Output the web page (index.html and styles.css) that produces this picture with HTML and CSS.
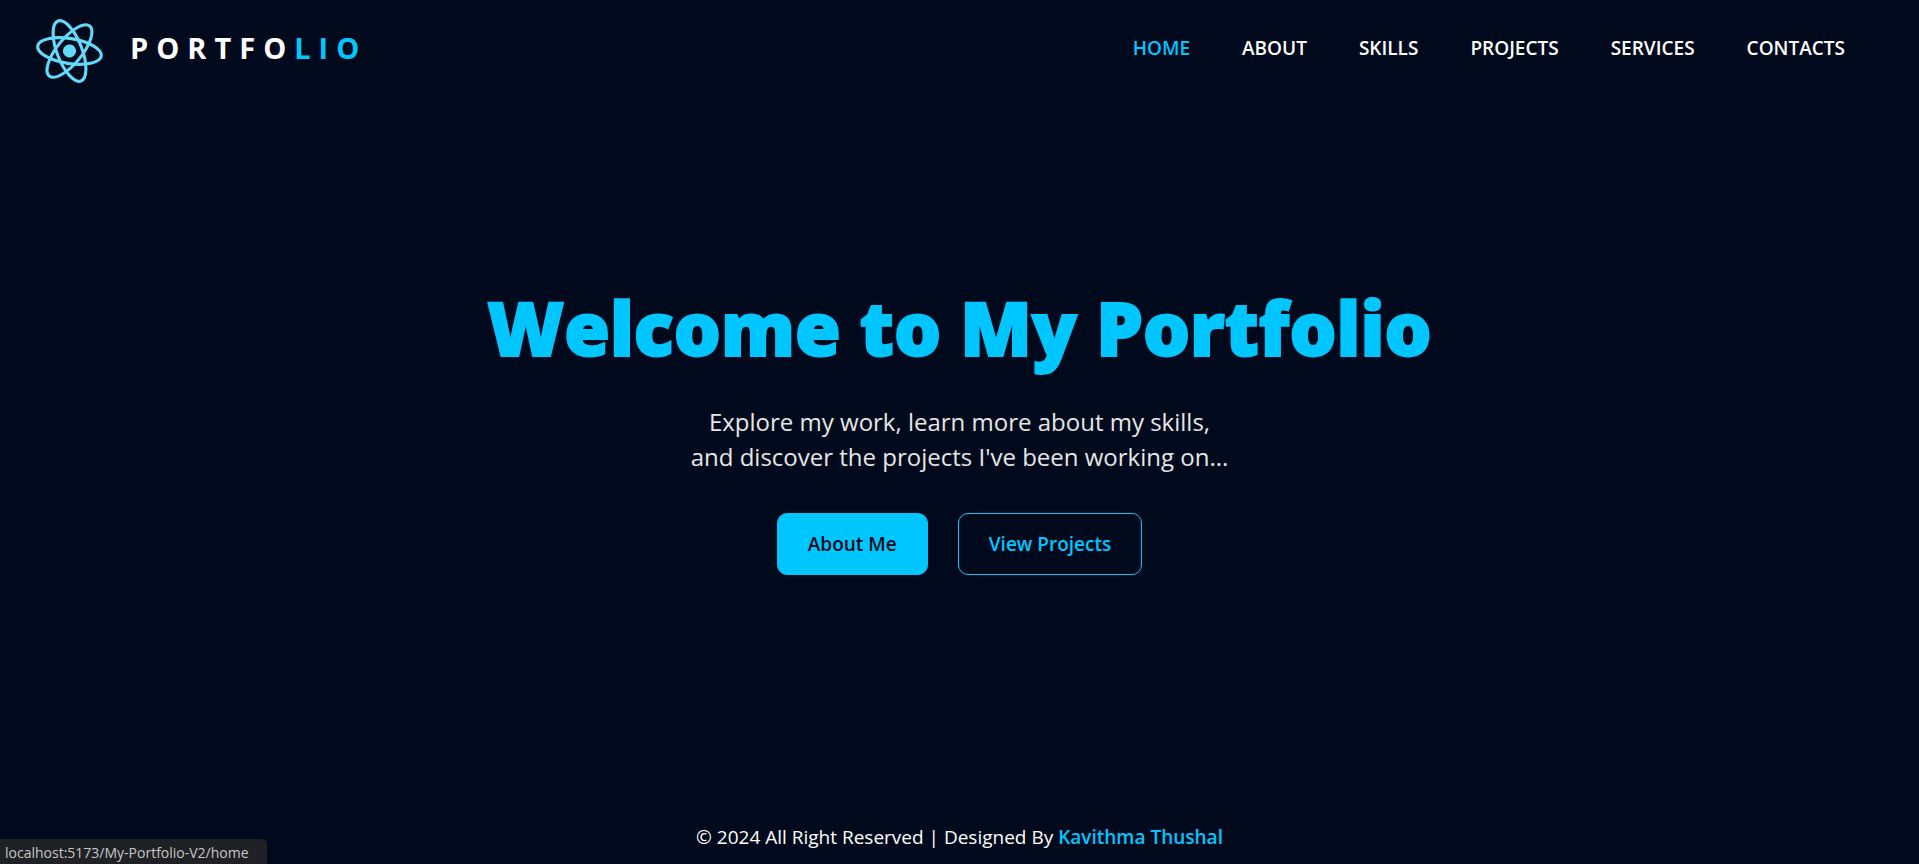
FILE: index.html
```html
<!DOCTYPE html>
<html lang="en">
<head>
<meta charset="utf-8">
<meta name="viewport" content="width=device-width, initial-scale=1">
<title>Portfolio</title>
<link rel="stylesheet" href="styles.css">
</head>
<body>
<header class="header">
  <a class="brand" href="#home">
    <svg class="logo" viewBox="-12 -12 24 24" aria-hidden="true">
      <g transform="rotate(9)">
        <circle r="2.1" fill="#61dafb"/>
        <g fill="none" stroke="#61dafb" stroke-width="1">
          <ellipse rx="10.3" ry="4"/>
          <ellipse rx="10.3" ry="4" transform="rotate(60)"/>
          <ellipse rx="10.3" ry="4" transform="rotate(120)"/>
        </g>
      </g>
    </svg>
    <span class="wordmark">PORTFO<span class="accent">LIO</span></span>
  </a>
  <nav class="nav">
    <a class="active" href="#home">HOME</a>
    <a href="#about">ABOUT</a>
    <a href="#skills">SKILLS</a>
    <a href="#projects">PROJECTS</a>
    <a href="#services">SERVICES</a>
    <a href="#contacts">CONTACTS</a>
  </nav>
</header>
<main class="hero">
  <h1 class="title">Welcome to My Portfolio</h1>
  <p class="lead">Explore my work, learn more about my skills,<br>and discover the projects I've been working on...</p>
  <div class="actions">
    <button class="btn btn-primary" type="button">About Me</button>
    <button class="btn btn-outline" type="button">View Projects</button>
  </div>
</main>
<footer class="footer">© 2024 All Right Reserved | Designed By <a href="#author">Kavithma Thushal</a></footer>
<div class="status">localhost:5173/My-Portfolio-V2/home</div>
</body>
</html>
```
FILE: styles.css
```css
* { box-sizing: border-box; }
body {
  margin: 0;
  min-height: 100vh;
  display: flex;
  flex-direction: column;
  background: #000a1c;
  color: #fff;
  font-family: "Open Sans", "Noto Sans", sans-serif;
  font-size: 19px;
}
a { color: inherit; text-decoration: none; }
.header {
  display: flex;
  justify-content: space-between;
  align-items: center;
  padding: 12px 74px 6px 32px;
}
.brand { display: flex; align-items: center; gap: 23px; }
.logo { width: 75px; height: 78px; }
.wordmark {
  font-size: 29px;
  font-weight: 700;
  letter-spacing: 8px;
  line-height: 40px;
  padding-bottom: 6px;
}
.accent { color: #00c6ff; }
.nav { display: flex; gap: 52px; font-weight: 600; line-height: 28px; padding-bottom: 6px; }
.active { color: #00c6ff; }
.hero {
  flex: 1;
  display: flex;
  flex-direction: column;
  align-items: center;
  justify-content: center;
  text-align: center;
}
.title {
  margin: 0 0 30px;
  color: #00c6ff;
  font-size: 74px;
  font-weight: 800;
  line-height: 92px;
  -webkit-text-stroke: 2px #00c6ff;
}
.lead { margin: 0 0 39px; color: #e6e6e6; font-size: 24px; line-height: 35px; }
.actions { display: flex; gap: 30px; }
.btn {
  padding: 16px 30px;
  border: 1px solid #00c6ff;
  border-radius: 10px;
  font: inherit;
  font-weight: 600;
  line-height: 28px;
}
.btn-primary { background: #00c6ff; color: #000a1c; }
.btn-outline { background: transparent; color: #00c6ff; }
.footer { padding: 62px 16px 13px; text-align: center; line-height: 28px; }
.footer a { color: #00c6ff; font-weight: 600; }
.status {
  position: fixed;
  left: 0;
  bottom: 0;
  padding: 3px 18px 0 5px;
  border-top-right-radius: 5px;
  background: #202124;
  color: #c4c7c5;
  font-size: 14px;
  line-height: 22px;
}
```
